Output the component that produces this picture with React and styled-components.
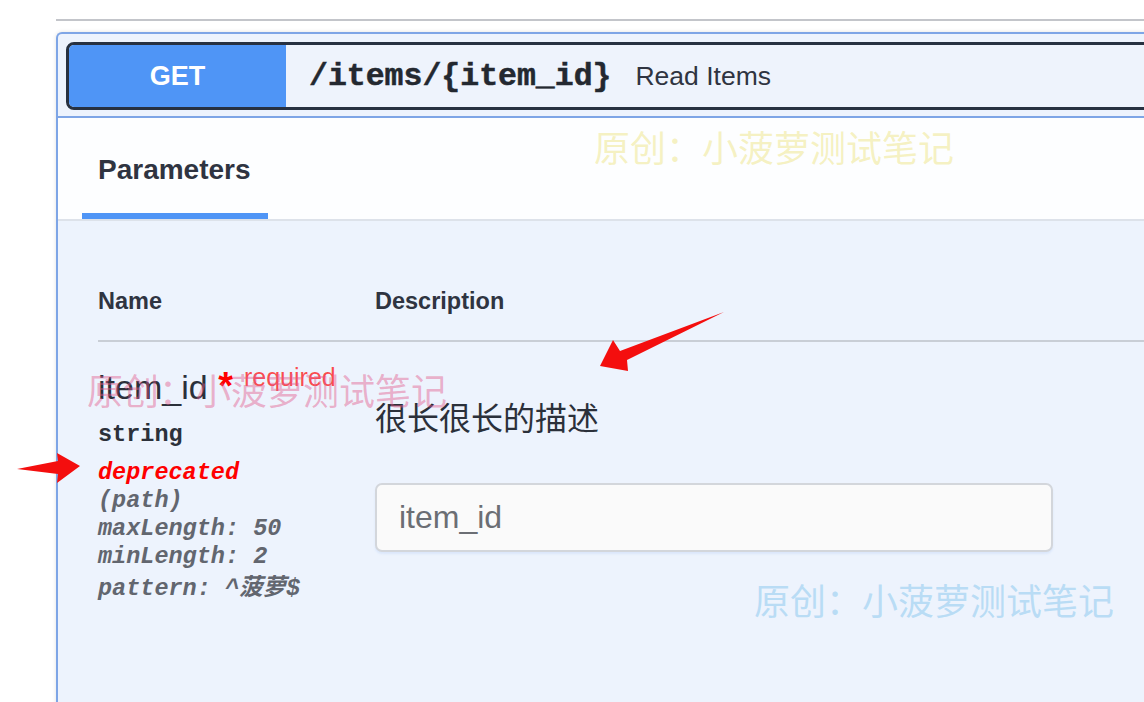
import React from "react";
import styled, { createGlobalStyle } from "styled-components";

const GlobalStyle = createGlobalStyle`
  html, body {
    margin: 0;
    padding: 0;
    background: #fff;
  }
  body {
    font-family: "Liberation Sans", "Noto Sans CJK SC", sans-serif;
    color: #3b4151;
    overflow: hidden;
  }
`;

const Page = styled.div`
  position: relative;
  width: 1144px;
  height: 702px;
  overflow: hidden;
  box-sizing: border-box;
  padding: 19px 0 0 56px;
`;

const Column = styled.div`
  width: 1200px;
`;

const TagRule = styled.div`
  height: 2px;
  background: #c3c5ca;
`;

const Opblock = styled.section`
  margin-top: 11px;
  height: 700px;
  border: 2px solid #7ea5e6;
  border-right: none;
  border-radius: 6px 0 0 0;
  background: #edf3fd;
  box-shadow: 0 0 4px rgba(0, 0, 0, 0.12);
`;

const Summary = styled.div`
  padding: 8px 0 6px 8px;
  border-bottom: 2px solid #7ea5e6;
`;

const SummaryButton = styled.div`
  display: flex;
  align-items: center;
  height: 68px;
  box-sizing: border-box;
  border: 3px solid #273141;
  border-radius: 8px;
  overflow: hidden;
  background: #eef3fc;
`;

const Method = styled.span`
  display: flex;
  align-items: center;
  justify-content: center;
  align-self: stretch;
  width: 217px;
  background: #4f95f6;
  color: #fff;
  font-size: 27px;
  font-weight: 700;
`;

const Path = styled.span`
  margin-left: 23px;
  font-family: "Liberation Mono", monospace;
  font-size: 31.5px;
  font-weight: 700;
  color: #232830;
  -webkit-text-stroke: 0.5px #232830;
`;

const SummaryText = styled.span`
  margin-left: 24px;
  font-size: 26.5px;
  color: #2f3441;
`;

const SectionHeader = styled.div`
  display: flex;
  height: 101px;
  padding-left: 24px;
  background: rgba(255, 255, 255, 0.85);
  border-bottom: 2px solid #dde2ea;
`;

const Tab = styled.h4`
  margin: 0;
  display: flex;
  align-items: center;
  box-sizing: border-box;
  height: 101px;
  padding: 9px 17px 0 16px;
  border-bottom: 6px solid #4f95f6;
  font-size: 28px;
  font-weight: 700;
  color: #2f3441;
`;

const Body = styled.div`
  padding-left: 40px;
`;

const HeadRow = styled.div`
  display: flex;
  padding: 65px 0 24px;
  border-bottom: 2px solid #c9ced6;
  font-size: 23.5px;
  font-weight: 700;
  line-height: 30px;
  color: #2f3441;
`;

const NameCol = styled.div`
  width: 277px;
  flex-shrink: 0;
`;

const ParamRow = styled.div`
  display: flex;
`;

const NameCell = styled(NameCol)`
  padding-top: 24px;
`;

const ParamName = styled.div`
  font-size: 34px;
  line-height: 40px;
  color: #2b303a;
  white-space: nowrap;

  span {
    color: #f00;
    font-size: 38px;
    font-weight: 700;
  }
  &::after {
    content: "required";
    position: relative;
    top: -13px;
    padding-left: 11px;
    font-size: 25px;
    color: rgba(255, 0, 0, 0.7);
  }
`;

const Mono = styled.div`
  font-family: "Liberation Mono", "Noto Sans CJK SC", monospace;
  font-size: 23.5px;
  font-weight: 700;
  line-height: 28px;
  margin-top: ${(p) => p.$gap || 0}px;
  color: ${(p) => p.$color || "#62666f"};
  font-style: ${(p) => (p.$italic ? "italic" : "normal")};
`;

const DescCell = styled.div`
  padding-top: 55px;
`;

const DescText = styled.p`
  margin: 0;
  font-size: 32px;
  line-height: 44px;
  color: #2b303a;
`;

const Input = styled.input`
  display: block;
  margin-top: 42px;
  width: 678px;
  height: 69px;
  box-sizing: border-box;
  padding: 0 22px;
  border: 2px solid #d3d6db;
  border-radius: 7px;
  background: #fafafa;
  box-shadow: 0 2px 2px rgba(120, 170, 240, 0.15);
  font-family: "Liberation Sans", sans-serif;
  font-size: 32px;
  color: #3b4151;
  outline: none;

  &::placeholder {
    color: #6b6e74;
  }
`;

const Watermark = styled.span`
  position: absolute;
  left: ${(p) => p.$x}px;
  top: ${(p) => p.$y}px;
  font-family: "Noto Sans CJK SC", sans-serif;
  font-size: 36px;
  line-height: 36px;
  white-space: nowrap;
  color: ${(p) => p.$color};
  pointer-events: none;
`;

const Arrows = styled.svg`
  position: absolute;
  left: 0;
  top: 0;
  pointer-events: none;
`;

const MARK = "原创：小菠萝测试笔记";

export default function App() {
  return (
    <>
      <GlobalStyle />
      <Page>
        <Column>
          <TagRule />
          <Opblock>
            <Summary>
              <SummaryButton>
                <Method>GET</Method>
                <Path>/items/{"{item_id}"}</Path>
                <SummaryText>Read Items</SummaryText>
              </SummaryButton>
            </Summary>
            <SectionHeader>
              <Tab>Parameters</Tab>
            </SectionHeader>
            <Body>
              <HeadRow>
                <NameCol>Name</NameCol>
                <div>Description</div>
              </HeadRow>
              <ParamRow>
                <NameCell>
                  <ParamName>
                    item_id<span>&nbsp;*</span>
                  </ParamName>
                  <Mono $gap={11} $color="#2b303a">string</Mono>
                  <Mono $gap={10} $color="#f00" $italic>deprecated</Mono>
                  <Mono $italic>(path)</Mono>
                  <Mono $italic>maxLength: 50</Mono>
                  <Mono $italic>minLength: 2</Mono>
                  <Mono $gap={4} $italic>pattern: ^菠萝$</Mono>
                </NameCell>
                <DescCell>
                  <DescText>很长很长的描述</DescText>
                  <Input placeholder="item_id" />
                </DescCell>
              </ParamRow>
            </Body>
          </Opblock>
        </Column>

        <Watermark $x={594} $y={128} $color="rgba(236, 226, 120, 0.45)">{MARK}</Watermark>
        <Watermark $x={87} $y={371} $color="rgba(226, 90, 140, 0.45)">{MARK}</Watermark>
        <Watermark $x={754} $y={581} $color="rgba(150, 205, 240, 0.6)">{MARK}</Watermark>

        <Arrows width="1144" height="702" viewBox="0 0 1144 702">
          <polygon
            fill="#f40e0e"
            points="600,366 613,340 620,351 724,312 627,360 628,371"
          />
          <polygon
            fill="#f40e0e"
            points="80,466 57,453 58,461 17,469 58,474 57,483"
          />
        </Arrows>
      </Page>
    </>
  );
}
